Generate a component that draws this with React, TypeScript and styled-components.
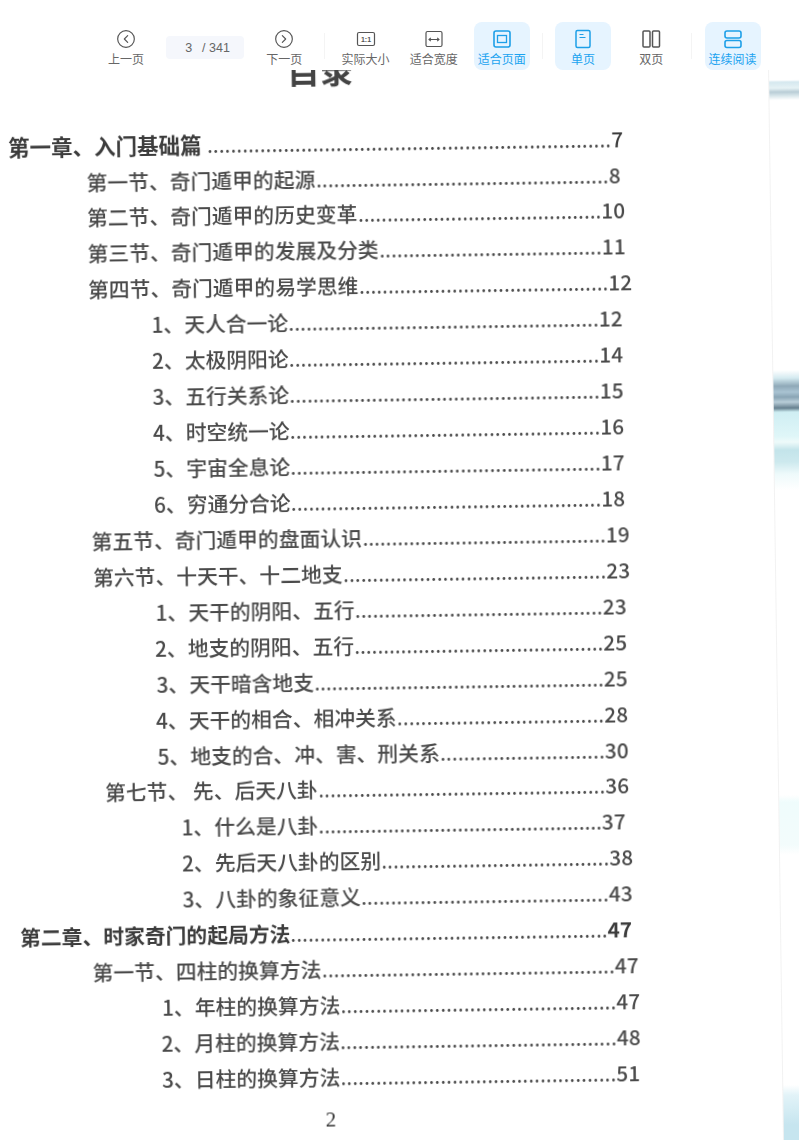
import React from "react";
import styled, { createGlobalStyle } from "styled-components";
import { CircleChevronLeft, CircleChevronRight } from "lucide-react";

const GlobalStyle = createGlobalStyle`
  html, body {
    margin: 0;
    padding: 0;
    background: #fff;
  }
`;

const cjk = `"Noto Sans CJK SC", "Noto Sans", sans-serif`;

interface TocEntry {
  label: string;
  page: string;
  left: number;
  right: number;
  chapter?: boolean;
  size?: number;
  plainPage?: boolean;
}

const entries: TocEntry[] = [
  { label: "第一章、入门基础篇 ", page: "7", left: 6, right: 621, chapter: true, size: 21.5, plainPage: true },
  { label: "第一节、奇门遁甲的起源", page: "8", left: 84, right: 618 },
  { label: "第二节、奇门遁甲的历史变革", page: "10", left: 84, right: 622 },
  { label: "第三节、奇门遁甲的发展及分类", page: "11", left: 84, right: 622 },
  { label: "第四节、奇门遁甲的易学思维", page: "12", left: 84, right: 628 },
  { label: "1、天人合一论", page: "12", left: 147, right: 618 },
  { label: "2、太极阴阳论", page: "14", left: 147, right: 618 },
  { label: "3、五行关系论", page: "15", left: 147, right: 618 },
  { label: "4、时空统一论", page: "16", left: 147, right: 618 },
  { label: "5、宇宙全息论", page: "17", left: 147, right: 618 },
  { label: "6、穷通分合论", page: "18", left: 147, right: 618 },
  { label: "第五节、奇门遁甲的盘面认识", page: "19", left: 84, right: 622 },
  { label: "第六节、十天干、十二地支", page: "23", left: 85, right: 622 },
  { label: "1、天干的阴阳、五行", page: "23", left: 147, right: 618 },
  { label: "2、地支的阴阳、五行", page: "25", left: 146, right: 618 },
  { label: "3、天干暗含地支", page: "25", left: 147, right: 618 },
  { label: "4、天干的相合、相冲关系", page: "28", left: 146, right: 618 },
  { label: "5、地支的合、冲、害、刑关系", page: "30", left: 147, right: 618 },
  { label: "第七节、 先、后天八卦", page: "36", left: 94, right: 618 },
  { label: "1、什么是八卦", page: "37", left: 170, right: 614 },
  { label: "2、先后天八卦的区别", page: "38", left: 170, right: 621 },
  { label: "3、八卦的象征意义", page: "43", left: 170, right: 620 },
  { label: "第二章、时家奇门的起局方法", page: "47", left: 7, right: 619, chapter: true },
  { label: "第一节、四柱的换算方法", page: "47", left: 79, right: 625 },
  { label: "1、年柱的换算方法", page: "47", left: 148, right: 626 },
  { label: "2、月柱的换算方法", page: "48", left: 147, right: 626 },
  { label: "3、日柱的换算方法", page: "51", left: 147, right: 625 },
];

const DOT_WIDTH = 5.78;

// how many leader dots fit between the label and the page number, and the
// extra spacing that makes them fill the gap
function leaderDots({ label, page, left, right, size = 20.8 }: TocEntry) {
  const labelWidth = Array.from(label).reduce((sum, ch) => {
    if (/[0-9]/.test(ch)) return sum + size * 0.555;
    if (ch === " ") return sum + size * 0.224;
    return sum + size;
  }, 0);
  const free = right - left - labelWidth - page.length * 20.8 * 0.56 - 1;
  const count = Math.floor(free / DOT_WIDTH);
  return { text: ".".repeat(count), spacing: free / count - DOT_WIDTH };
}

function App() {
  return (
    <Viewport>
      <GlobalStyle />

      <Toolbar>
        <ToolButton>
          <CircleChevronLeft size={20} strokeWidth={1.4} />
          <span>上一页</span>
        </ToolButton>
        <PageInput>
          <span>3</span>
          <span>/ 341</span>
        </PageInput>
        <ToolButton>
          <CircleChevronRight size={20} strokeWidth={1.4} />
          <span>下一页</span>
        </ToolButton>
        <Divider />
        <ToolButton>
          <svg width="20" height="20" viewBox="0 0 20 20" fill="none">
            <rect x="1.5" y="3.5" width="17" height="13" rx="1.5" stroke="currentColor" strokeWidth="1.2" />
            <text x="10" y="12.5" textAnchor="middle" fontSize="7" fontWeight="700" fontFamily="Liberation Sans" fill="currentColor">
              1:1
            </text>
          </svg>
          <span>实际大小</span>
        </ToolButton>
        <ToolButton>
          <svg width="20" height="20" viewBox="0 0 20 20" fill="none">
            <rect x="2" y="2.5" width="16" height="15" rx="1.5" stroke="currentColor" strokeWidth="1.2" />
            <path d="M5 10.5h10M6.8 8.8L5 10.5l1.8 1.7M13.2 8.8l1.8 1.7-1.8 1.7" stroke="currentColor" strokeWidth="1.1" />
          </svg>
          <span>适合宽度</span>
        </ToolButton>
        <ToolButton $active>
          <svg width="20" height="20" viewBox="0 0 20 20" fill="none">
            <rect x="2" y="2" width="16" height="16" rx="2" stroke="currentColor" strokeWidth="1.6" />
            <rect x="5.5" y="6.5" width="9" height="7" stroke="currentColor" strokeWidth="1.3" />
          </svg>
          <span>适合页面</span>
        </ToolButton>
        <Divider />
        <ToolButton $active>
          <svg width="20" height="20" viewBox="0 0 20 20" fill="none">
            <rect x="3" y="1.5" width="14" height="17" rx="1.5" stroke="currentColor" strokeWidth="1.5" />
            <path d="M6.5 5.5h4M6.5 8.5h6" stroke="currentColor" strokeWidth="1.2" />
          </svg>
          <span>单页</span>
        </ToolButton>
        <ToolButton>
          <svg width="20" height="20" viewBox="0 0 20 20" fill="none">
            <rect x="2" y="2" width="7" height="16" rx="1" stroke="currentColor" strokeWidth="1.5" />
            <rect x="11.5" y="2" width="7" height="16" rx="1" stroke="currentColor" strokeWidth="1.5" />
          </svg>
          <span>双页</span>
        </ToolButton>
        <Divider />
        <ToolButton $active>
          <svg width="20" height="20" viewBox="0 0 20 20" fill="none">
            <rect x="2" y="2" width="16" height="7" rx="2" stroke="currentColor" strokeWidth="1.6" />
            <rect x="2" y="11.5" width="16" height="7" rx="2" stroke="currentColor" strokeWidth="1.6" />
          </svg>
          <span>连续阅读</span>
        </ToolButton>
      </Toolbar>

      <ScannedPage>
        <ScanEdge />
        <Title>目录</Title>
        <TocList>
          {entries.map((entry) => {
            const leader = leaderDots(entry);
            return (
              <TocRow
                key={entry.label}
                $left={entry.left}
                $right={entry.right}
                $chapter={entry.chapter}
                $size={entry.size}
              >
                <span>{entry.label}</span>
                <Leader style={{ letterSpacing: leader.spacing }}>{leader.text}</Leader>
                <PageRef $plain={entry.plainPage}>{entry.page}</PageRef>
              </TocRow>
            );
          })}
        </TocList>
        <PageNumber>2</PageNumber>
      </ScannedPage>
    </Viewport>
  );
}

const Viewport = styled.div`
  position: relative;
  height: 1140px;
  overflow: hidden;
  background: #fff;
`;

const Toolbar = styled.header`
  position: absolute;
  top: 0;
  left: 0;
  right: 0;
  z-index: 2;
  height: 70px;
  box-sizing: border-box;
  padding: 22px 0 0 98px;
  display: flex;
  align-items: flex-start;
  gap: 12.15px;
  background: #fff;
`;

const ToolButton = styled.button<{ $active?: boolean }>`
  width: 56px;
  height: 48px;
  flex: none;
  padding: 7px 0 0;
  border: none;
  border-radius: 8px;
  display: flex;
  flex-direction: column;
  align-items: center;
  gap: 2px;
  background: ${(p) => (p.$active ? "#e6f4ff" : "transparent")};
  color: ${(p) => (p.$active ? "#1d9fe8" : "#555")};
  font-family: ${cjk};
  font-size: 12px;
  line-height: 16px;
  white-space: nowrap;

  span {
    color: ${(p) => (p.$active ? "#1aa3f0" : "#666")};
  }
`;

const PageInput = styled.div`
  width: 78px;
  height: 23px;
  flex: none;
  margin-top: 14px;
  box-sizing: border-box;
  padding-left: 19px;
  display: flex;
  align-items: center;
  gap: 10px;
  border-radius: 4px;
  background: #f5f7fc;
  color: #666;
  font-family: "Liberation Sans", sans-serif;
  font-size: 12.5px;
`;

const Divider = styled.div`
  width: 1px;
  height: 26px;
  flex: none;
  margin-top: 11px;
  background: #f4f4f4;
`;

const ScannedPage = styled.main`
  position: relative;
  width: 767px;
  height: 1170px;
  transform: rotate(-0.8deg);
  transform-origin: 0 0;
  filter: blur(0.3px);
`;

const ScanEdge = styled.div`
  position: absolute;
  top: 0;
  left: 767px;
  width: 60px;
  height: 1170px;
  border-left: 1px solid #f2f2f2;
  background: linear-gradient(
    to bottom,
    #fff 0,
    #fff 91px,
    #d5e8ef 93px,
    #e6f2f5 99px,
    #b9cdd6 103px,
    #dbe8ec 107px,
    #fff 111px,
    #fff 381px,
    #d4eaf0 389px,
    #8fa9b8 397px,
    #a9c3d2 403px,
    #8aa5b5 408px,
    #b8cdd8 413px,
    #66808f 419px,
    #cfeef3 423px,
    #dff6f8 447px,
    #eefafa 453px,
    #c3e4ea 461px,
    #cde9ee 473px,
    #eefafb 485px,
    #fff 501px,
    #fff 806px,
    #effcfc 813px,
    #f3fcfc 856px,
    #fff 866px,
    #fff 1096px,
    #e2f3f8 1106px,
    #c6e5ef 1136px,
    #c6e5ef 1170px
  );
`;

const Title = styled.h1`
  margin: 0;
  height: 129px;
  box-sizing: border-box;
  padding: 0 0 35px 286px;
  display: flex;
  align-items: flex-end;
  color: #444;
  font-family: ${cjk};
  font-size: 33px;
  font-weight: 700;
  line-height: 40px;
`;

const TocList = styled.ol`
  margin: 0;
  padding: 0;
  list-style: none;
  display: flex;
  flex-direction: column;
`;

const TocRow = styled.li<{ $left: number; $right: number; $chapter?: boolean; $size?: number }>`
  height: 35.95px;
  margin-left: ${(p) => p.$left}px;
  width: ${(p) => p.$right - p.$left}px;
  display: flex;
  align-items: center;
  color: ${(p) => (p.$chapter ? "#3c3c3c" : "#4a4a4a")};
  font-family: ${cjk};
  font-size: ${(p) => p.$size ?? 20.8}px;
  font-weight: ${(p) => (p.$chapter ? 700 : 500)};
  line-height: 1;
  white-space: pre;
`;

const Leader = styled.div`
  flex: 1;
  min-width: 0;
  text-align: right;
  font-size: 20.8px;
  font-weight: 400;
  color: #4a4a4a;
`;

const PageRef = styled.span<{ $plain?: boolean }>`
  font-size: 20.8px;
  ${(p) => (p.$plain ? "font-weight: 500;" : "")}
`;

const PageNumber = styled.footer`
  margin-top: 13px;
  padding-left: 310px;
  color: #333;
  font-family: "Liberation Serif", serif;
  font-size: 21px;
  line-height: 24px;
`;

export default App;
